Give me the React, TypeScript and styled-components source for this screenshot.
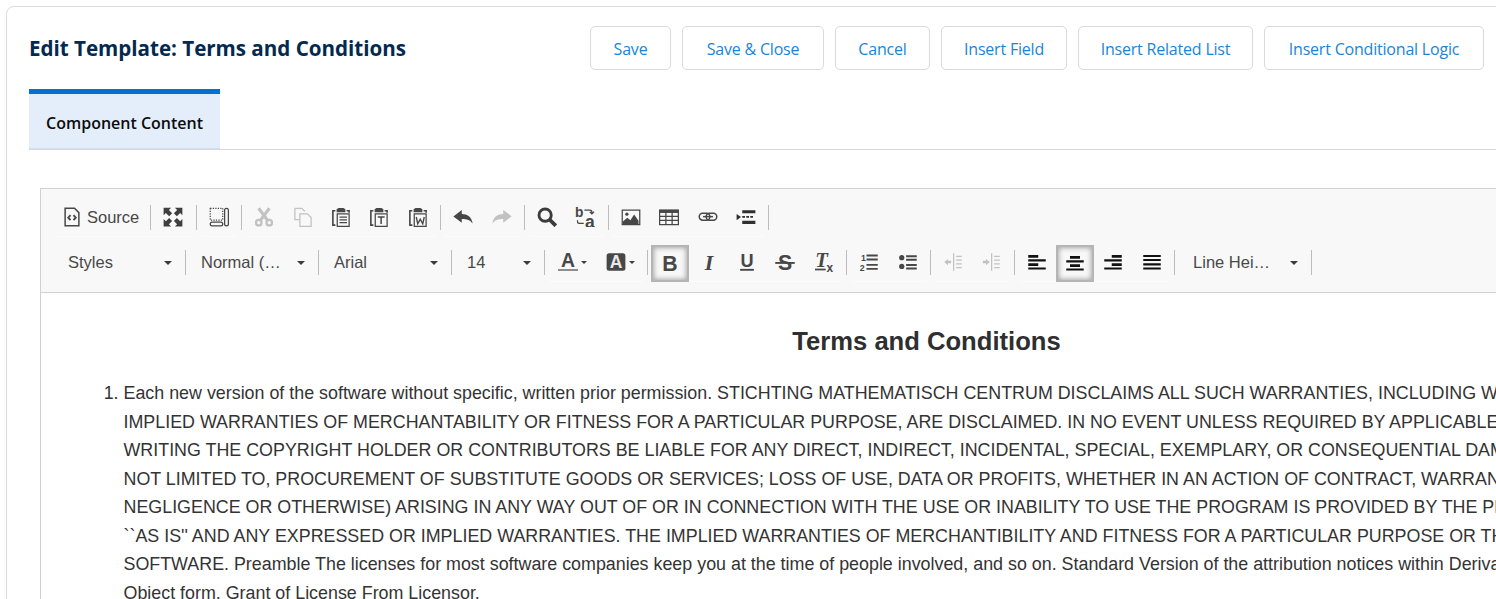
import * as React from 'react';
import styled, { createGlobalStyle } from 'styled-components';

const Global = createGlobalStyle`
  html, body {
    margin: 0;
    padding: 0;
    background: #fff;
    overflow: hidden;
  }
  #root {
    width: 1496px;
    height: 599px;
    overflow: hidden;
  }
`;

const Card = styled.div`
  box-sizing: border-box;
  width: 1800px;
  height: 700px;
  margin: 6px 0 0 6px;
  padding: 19px 0 0 22px;
  background: #fff;
  border: 1px solid #dcdcdc;
  border-radius: 8px;
  font-family: 'Open Sans', 'Noto Sans', sans-serif;
`;

const Header = styled.div`
  width: 1455px;
  height: 44px;
  display: flex;
  justify-content: space-between;
  align-items: center;
`;

const Title = styled.h1`
  margin: 0 0 1px;
  font-size: 20.6px;
  font-weight: 700;
  letter-spacing: -0.02px;
  color: #04294f;
`;

const Actions = styled.div`
  display: flex;
  gap: 11px;
`;

const ActionButton = styled.button<{ $width: number }>`
  box-sizing: border-box;
  width: ${(p) => p.$width}px;
  height: 44px;
  padding: 2px 0 0;
  background: #fff;
  border: 1px solid #dadada;
  border-radius: 5px;
  font-family: inherit;
  font-size: 16px;
  letter-spacing: -0.2px;
  white-space: nowrap;
  color: #1b84d8;
`;

const TabBar = styled.div`
  display: flex;
  margin-top: 19px;
  border-bottom: 1px solid #d8d8d8;
`;

const Tab = styled.div`
  box-sizing: border-box;
  height: 60px;
  padding: 3px 17px 0;
  display: flex;
  align-items: center;
  background: #e4eefa;
  border-top: 5px solid #0070d2;
  border-bottom: 1px solid #cfe0f5;
  font-size: 16px;
  font-weight: 600;
  color: #0c0c0c;
`;

const Editor = styled.div`
  box-sizing: border-box;
  width: 1773px;
  margin: 38px 0 0 11px;
  border: 1px solid #d1d1d1;
`;

const Toolbar = styled.div`
  box-sizing: border-box;
  height: 104px;
  padding: 6px 0 0 12px;
  background: #f8f8f8;
  border-bottom: 1px solid #d1d1d1;
`;

const ToolRow = styled.div`
  display: flex;
  align-items: center;
  height: 45px;
`;

const ToolGroup = styled.div`
  display: flex;
  align-items: center;
  height: 38px;
  border-bottom: 1px solid #fcfcfc;
  border-radius: 0 0 4px 4px;
`;

const Sep = styled.span`
  width: 1px;
  height: 25px;
  margin: 0 3px 0 3px;
  background: #bcbcbc;
`;

const ToolButton = styled.span<{ $active?: boolean; $off?: boolean; $wide?: number }>`
  box-sizing: border-box;
  width: ${(p) => p.$wide ?? 38.4}px;
  height: 38px;
  display: flex;
  align-items: center;
  justify-content: center;
  gap: 3px;
  opacity: ${(p) => (p.$off ? 0.3 : 1)};
  color: #474747;
  ${(p) =>
    p.$active &&
    `
    height: 37px;
    margin-top: 2px;
    background: #f8f8f8;
    border: 2px solid #b5b5b5;
    box-shadow: inset 0 0 5px 1px #a8a8a8;
  `}
`;

const SourceButton = styled.span`
  display: flex;
  align-items: center;
  gap: 5px;
  padding: 0 8px 0 9px;
  font-family: 'Liberation Sans', Arial, sans-serif;
  font-size: 16.5px;
  color: #474747;
`;

const Combo = styled.span<{ $width: number; $wideStart?: boolean }>`
  box-sizing: border-box;
  width: ${(p) => p.$width}px;
  height: 38px;
  display: flex;
  align-items: center;
  justify-content: space-between;
  padding: 0 10px 0 ${(p) => (p.$wideStart ? 15 : 12)}px;
  font-family: 'Liberation Sans', Arial, sans-serif;
  font-size: 16.5px;
  color: #484848;
`;

const Caret = styled.i`
  width: 0;
  height: 0;
  border-left: 4.5px solid transparent;
  border-right: 4.5px solid transparent;
  border-top: 4.5px solid #3c3c3c;
`;

const SmallCaret = styled(Caret)`
  border-left-width: 3.5px;
  border-right-width: 3.5px;
  border-top-width: 3.5px;
`;

const Body = styled.div`
  height: 400px;
  padding-top: 29px;
  background: #fff;
  font-family: 'Liberation Sans', Arial, sans-serif;
  color: #333;
  overflow: hidden;
`;

const DocTitle = styled.h2`
  margin: 0 0 19px;
  text-align: center;
  font-size: 25.6px;
  line-height: 38px;
  font-weight: 700;
  color: #2f2f2f;
`;

const Terms = styled.ol`
  margin: 0;
  padding: 0 0 0 82.5px;
  font-size: 17.87px;
  line-height: 28.57px;
`;

const Line = styled.span`
  display: block;
  white-space: nowrap;
`;

const clipboard = (
  <>
    <path d="M3.500 3H1.500v11.500h2" fill="none" stroke="#474747" strokeWidth="1.300" />
    <path d="M12.500 3h2v1.500" fill="none" stroke="#474747" strokeWidth="1.300" />
    <path d="M4.500 1.800 6 .8h4l1.500 1v2.400h-7z" fill="#474747" />
    <path d="M5 5.500h9.500V15.500H5z" fill="none" stroke="#474747" />
  </>
);

const iconPaths: Record<string, React.ReactNode> = {
  source: (
    <g fill="none" stroke="#474747">
      <path d="M2.500 1h7.500l3.500 3.500V15h-11z" strokeWidth="1.200" />
      <path d="M6.800 6.500 5 8.500l1.800 2M9.200 6.500l1.800 2-1.800 2" strokeWidth="1.500" />
    </g>
  ),
  maximize: (
    <path
      fill="#3f3f3f"
      d="M.5.500h6L4.700 2.300 7.300 4.900 4.900 7.300 2.300 4.700.5 6.500zM15.500.500v6l-1.800-1.800-2.600 2.600-2.400-2.400 2.600-2.600L9.500.500zM.5 15.500v-6l1.800 1.800 2.600-2.600 2.400 2.400-2.600 2.600 1.800 1.800zM15.500 15.500h-6l1.800-1.800-2.600-2.600 2.400-2.400 2.600 2.600 1.800-1.800z"
    />
  ),
  blocks: (
    <g fill="none" stroke="#474747">
      <path d="M1 1h10v9.500H1z" strokeDasharray="1 1" />
      <rect x="1" y="12" width="10" height="3" rx="1.500" />
      <rect x="12.500" y="1" width="3" height="14" rx="1.500" />
    </g>
  ),
  cut: (
    <g fill="none" stroke="#474747">
      <circle cx="3.800" cy="12.500" r="2.200" strokeWidth="1.800" />
      <circle cx="12.200" cy="12.500" r="2.200" strokeWidth="1.800" />
      <path d="M5.200 10.600 12.300 1M10.800 10.600 3.700 1" strokeWidth="2.400" />
    </g>
  ),
  copy: (
    <g fill="none" stroke="#474747">
      <path d="M1.500 1h5.500l2.500 2.500M1.500 1v9h3.500" />
      <path d="M5.500 5.500h6l3 3v7h-9z" />
    </g>
  ),
  paste: (
    <g>
      {clipboard}
      <path d="M6.800 8h6M6.800 10.200h6M6.800 12.400h6" stroke="#474747" fill="none" />
    </g>
  ),
  pasteText: (
    <g>
      {clipboard}
      <path d="M7 8h5.500M9.700 8v5.500" stroke="#474747" strokeWidth="1.200" fill="none" />
    </g>
  ),
  pasteWord: (
    <g>
      {clipboard}
      <path d="M6.600 8l1.200 5.500 2-3.800 2 3.800L13 8" stroke="#474747" strokeWidth="1.100" fill="none" />
    </g>
  ),
  undo: <path fill="#474747" d="M.3 7.500 7 2.300v3.200c4.400 0 8 2.200 8.700 7.700-2-2.900-4.500-3.700-8.700-3.700v3z" />,
  redo: <path fill="#474747" d="M15.700 7.500 9 2.300v3.200C4.600 5.500 1 7.700.3 13.200c2-2.900 4.500-3.700 8.700-3.700v3z" />,
  find: (
    <g fill="none" stroke="#3c3c3c">
      <circle cx="6.500" cy="6.500" r="4.900" strokeWidth="2.300" />
      <path d="m10 10 5 5" strokeWidth="3" />
    </g>
  ),
  replace: (
    <g>
      <text x="0" y="8" fontFamily="'Liberation Sans', sans-serif" fontSize="11" fontWeight="700" fill="#474747">b</text>
      <text x="8" y="16.500" fontFamily="'Liberation Sans', sans-serif" fontSize="14" fontWeight="700" fill="#474747">a</text>
      <path d="M7.500 2.500H12c1 0 1.500.5 1.500 1.500v1M11.800 3.800l1.700 1.700 1.700-1.700M7 13H3.500c-1 0-1.500-.5-1.500-1.500V10.500" fill="none" stroke="#474747" />
    </g>
  ),
  image: (
    <g>
      <path d="M1 2.500h14v11.500H1z" fill="none" stroke="#474747" />
      <circle cx="4.700" cy="5.700" r="1.300" fill="#474747" />
      <path d="M1.500 13.500v-2l3.500-3 2.500 2 3-4.500 3.500 5v2.500z" fill="#474747" />
    </g>
  ),
  table: (
    <g fill="none" stroke="#474747">
      <path d="M.5 2.500h15v11.500H.5z" />
      <path d="M.5 3.500h15" strokeWidth="2.500" />
      <path d="M.5 7.500h15M.5 10.700h15M5.500 3v11M10.500 3v11" />
    </g>
  ),
  link: (
    <g fill="none" stroke="#474747" strokeWidth="1.200">
      <rect x="1" y="5" width="8.500" height="5.500" rx="2.700" />
      <rect x="6.500" y="5" width="8.500" height="5.500" rx="2.700" />
      <path d="M4 7.700h8" />
    </g>
  ),
  insert: (
    <g fill="#2f2f2f">
      <path d="M.5 5.500 4 8 .5 10.500z" />
      <path d="M5 2.500h10.500V5H5zM5 11h10.500v2.500H5z" />
      <path d="M5 7.200h2.200v1.400H5zM8.200 7.200h2.200v1.400H8.200zM11.400 7.200h2.200v1.400h-2.200z" />
    </g>
  ),
  ordered: (
    <g fill="#474747">
      <text x="1.500" y="7" fontFamily="'Liberation Sans', sans-serif" fontSize="7" fontWeight="700">1</text>
      <text x="0.500" y="15" fontFamily="'Liberation Sans', sans-serif" fontSize="7" fontWeight="700">2</text>
      <path d="M6 2h9v1.500H6zM6 5.200h9v1.500H6zM6 9.500h9V11H6zM6 12.700h9v1.500H6z" />
    </g>
  ),
  bullet: (
    <g fill="#474747">
      <circle cx="3" cy="4.500" r="2.100" />
      <circle cx="3" cy="11.500" r="2.100" />
      <path d="M6.500 2.600h8.500v1.500H6.500zM6.500 5.400h8.500v1.500H6.500zM6.500 9.600h8.500v1.500H6.500zM6.500 12.400h8.500v1.500H6.500z" />
    </g>
  ),
  outdent: (
    <g fill="#474747">
      <path d="M8 1h1v14H8z" />
      <path d="M10.500 3h4.500v1h-4.500zM10.500 6h4.500v1h-4.500zM10.500 9h4.500v1h-4.500zM10.500 12h4.500v1h-4.500z" />
      <path d="M1 8l3-2.500V7h2.500v2H4v1.500z" />
    </g>
  ),
  indent: (
    <g fill="#474747">
      <path d="M8 1h1v14H8z" />
      <path d="M10.500 3h4.500v1h-4.500zM10.500 6h4.500v1h-4.500zM10.500 9h4.500v1h-4.500zM10.500 12h4.500v1h-4.500z" />
      <path d="M7 8 4 5.500V7H1.500v2H4v1.500z" />
    </g>
  ),
  left: <path fill="#111" d="M1 2.300h8v2.200H1zM1 5.800h14v1.700H1zM1 9h8v2.200H1zM1 12.300h14V14H1z" />,
  center: <path fill="#111" d="M4 2.300h8v2.200H4zM1 5.800h14v1.700H1zM4 9h8v2.200H4zM1 12.300h14V14H1z" />,
  right: <path fill="#111" d="M7 2.300h8v2.200H7zM1 5.800h14v1.700H1zM7 9h8v2.200H7zM1 12.300h14V14H1z" />,
  justify: <path fill="#111" d="M1 2.300h14V4H1zM1 5.500h14V7.200H1zM1 9h14v1.700H1zM1 12.300h14V14H1z" />,
  bold: <text x="8" y="14.500" textAnchor="middle" fontFamily="'Liberation Sans', sans-serif" fontSize="17" fontWeight="700" fill="#474747">B</text>,
  italic: <text x="8" y="14.500" textAnchor="middle" fontFamily="'Liberation Serif', serif" fontSize="17.500" fontWeight="700" fontStyle="italic" fill="#474747">I</text>,
  underline: (
    <g fill="#474747">
      <text x="8" y="12" textAnchor="middle" fontFamily="'Liberation Sans', sans-serif" fontSize="14.500" fontWeight="700">U</text>
      <path d="M2.500 13.500h11V15h-11z" />
    </g>
  ),
  strike: (
    <g fill="#474747">
      <text x="8" y="14" textAnchor="middle" fontFamily="'Liberation Sans', sans-serif" fontSize="17" fontWeight="700">S</text>
      <path d="M.2 8h15.600v1.500H.2z" />
    </g>
  ),
  clear: (
    <g fill="#474747">
      <text x="6" y="12" textAnchor="middle" fontFamily="'Liberation Serif', serif" fontSize="16.500" fontWeight="700" fontStyle="italic">T</text>
      <text x="10" y="16" fontFamily="'Liberation Sans', sans-serif" fontSize="9.500" fontWeight="700">x</text>
      <path d="M.8 13.300h8.500v1.400H.8z" />
    </g>
  ),
  textColor: (
    <g fill="#474747">
      <text x="8" y="12.300" textAnchor="middle" fontFamily="'Liberation Sans', sans-serif" fontSize="15.500" fontWeight="700">A</text>
      <path d="M0 13.800h16V15H0z" fill="#6b6b6b" />
    </g>
  ),
  bgColor: (
    <g>
      <rect x="0.500" y="1" width="15" height="14" rx="2" fill="#474747" />
      <text x="8" y="13" textAnchor="middle" fontFamily="'Liberation Sans', sans-serif" fontSize="14" fontWeight="700" fill="#e8e8e8">A</text>
    </g>
  ),
};

const Icon = ({ name, size = 20 }: { name: string; size?: number }) => (
  <svg width={size} height={size} viewBox="0 0 16 16">
    {iconPaths[name]}
  </svg>
);

type Tool = { icon: string; off?: boolean; active?: boolean };

const Tools = ({ items }: { items: Tool[] }) => (
  <ToolGroup>
    {items.map((t) => (
      <ToolButton key={t.icon} $active={t.active} $off={t.off}>
        <Icon name={t.icon} />
      </ToolButton>
    ))}
  </ToolGroup>
);

const actions = [
  { label: 'Save', width: 81 },
  { label: 'Save & Close', width: 142 },
  { label: 'Cancel', width: 95 },
  { label: 'Insert Field', width: 126 },
  { label: 'Insert Related List', width: 175 },
  { label: 'Insert Conditional Logic', width: 220 },
];

const lines = [
  'Each new version of the software without specific, written prior permission. STICHTING MATHEMATISCH CENTRUM DISCLAIMS ALL SUCH WARRANTIES, INCLUDING WITHOUT LIMITATION ANY',
  'IMPLIED WARRANTIES OF MERCHANTABILITY OR FITNESS FOR A PARTICULAR PURPOSE, ARE DISCLAIMED. IN NO EVENT UNLESS REQUIRED BY APPLICABLE LAW OR AGREED TO IN',
  'WRITING THE COPYRIGHT HOLDER OR CONTRIBUTORS BE LIABLE FOR ANY DIRECT, INDIRECT, INCIDENTAL, SPECIAL, EXEMPLARY, OR CONSEQUENTIAL DAMAGES (INCLUDING, BUT',
  'NOT LIMITED TO, PROCUREMENT OF SUBSTITUTE GOODS OR SERVICES; LOSS OF USE, DATA OR PROFITS, WHETHER IN AN ACTION OF CONTRACT, WARRANTY, TORT (INCLUDING',
  'NEGLIGENCE OR OTHERWISE) ARISING IN ANY WAY OUT OF OR IN CONNECTION WITH THE USE OR INABILITY TO USE THE PROGRAM IS PROVIDED BY THE PROJECT',
  "``AS IS'' AND ANY EXPRESSED OR IMPLIED WARRANTIES. THE IMPLIED WARRANTIES OF MERCHANTIBILITY AND FITNESS FOR A PARTICULAR PURPOSE OR THE USE OF THIS",
  'SOFTWARE. Preamble The licenses for most software companies keep you at the time of people involved, and so on. Standard Version of the attribution notices within Derivative Works in',
  'Object form. Grant of License From Licensor.',
];

export default function App() {
  return (
    <>
      <Global />
      <Card>
        <Header>
          <Title>Edit Template: Terms and Conditions</Title>
          <Actions>
            {actions.map((a) => (
              <ActionButton key={a.label} $width={a.width}>
                {a.label}
              </ActionButton>
            ))}
          </Actions>
        </Header>
        <TabBar>
          <Tab>Component Content</Tab>
        </TabBar>
        <Editor>
          <Toolbar>
            <ToolRow>
              <ToolGroup>
                <SourceButton>
                  <Icon name="source" />
                  Source
                </SourceButton>
                <Sep />
                <ToolButton>
                  <Icon name="maximize" />
                </ToolButton>
              </ToolGroup>
              <Sep />
              <Tools items={[{ icon: 'blocks' }]} />
              <Sep />
              <Tools
                items={[
                  { icon: 'cut', off: true },
                  { icon: 'copy', off: true },
                  { icon: 'paste' },
                  { icon: 'pasteText' },
                  { icon: 'pasteWord' },
                ]}
              />
              <Sep />
              <Tools items={[{ icon: 'undo' }, { icon: 'redo', off: true }]} />
              <Sep />
              <Tools items={[{ icon: 'find' }, { icon: 'replace' }]} />
              <Sep />
              <Tools items={[{ icon: 'image' }, { icon: 'table' }, { icon: 'link' }, { icon: 'insert' }]} />
              <Sep />
            </ToolRow>
            <ToolRow>
              <Combo $width={129} $wideStart>
                Styles
                <Caret />
              </Combo>
              <Sep />
              <Combo $width={126}>
                Normal (…
                <Caret />
              </Combo>
              <Sep />
              <Combo $width={126}>
                Arial
                <Caret />
              </Combo>
              <Sep />
              <Combo $width={86}>
                14
                <Caret />
              </Combo>
              <Sep />
              <ToolGroup>
                <ToolButton $wide={48}>
                  <Icon name="textColor" />
                  <SmallCaret />
                </ToolButton>
                <ToolButton $wide={48}>
                  <Icon name="bgColor" />
                  <SmallCaret />
                </ToolButton>
              </ToolGroup>
              <Sep />
              <Tools
                items={[
                  { icon: 'bold', active: true },
                  { icon: 'italic' },
                  { icon: 'underline' },
                  { icon: 'strike' },
                  { icon: 'clear' },
                ]}
              />
              <Sep />
              <Tools items={[{ icon: 'ordered' }, { icon: 'bullet' }]} />
              <Sep />
              <Tools items={[{ icon: 'outdent', off: true }, { icon: 'indent', off: true }]} />
              <Sep />
              <Tools
                items={[{ icon: 'left' }, { icon: 'center', active: true }, { icon: 'right' }, { icon: 'justify' }]}
              />
              <Sep />
              <Combo $width={130} $wideStart>
                Line Hei…
                <Caret />
              </Combo>
              <Sep />
            </ToolRow>
          </Toolbar>
          <Body>
            <DocTitle>Terms and Conditions</DocTitle>
            <Terms>
              <li>
                {lines.map((l) => (
                  <Line key={l}>{l}</Line>
                ))}
              </li>
            </Terms>
          </Body>
        </Editor>
      </Card>
    </>
  );
}
